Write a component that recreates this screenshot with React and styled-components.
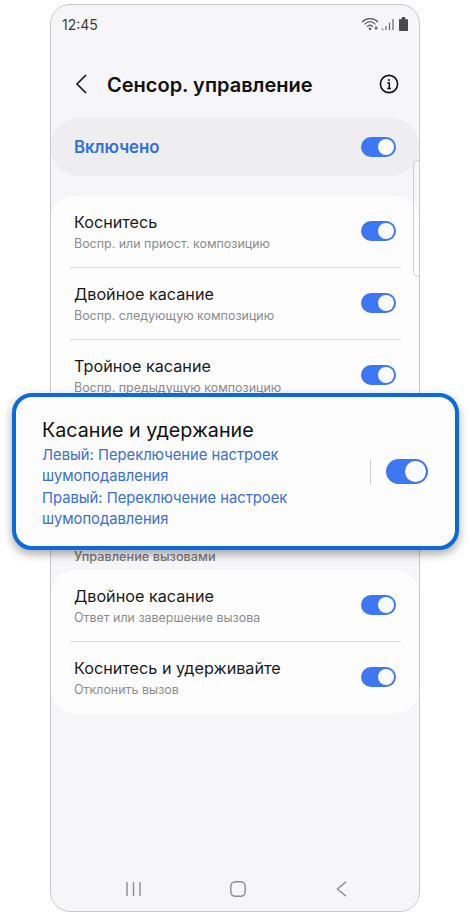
import React from "react";
import styled, { createGlobalStyle } from "styled-components";

const GlobalStyle = createGlobalStyle`
  html, body {
    margin: 0;
    padding: 0;
    background: #fff;
  }
  body {
    font-family: "Inter", "Roboto", "Liberation Sans", sans-serif;
  }
`;

const touchRows = [
  { title: "Коснитесь", sub: "Воспр. или приост. композицию" },
  { title: "Двойное касание", sub: "Воспр. следующую композицию" },
  { title: "Тройное касание", sub: "Воспр. предыдущую композицию" },
];

const callRows = [
  { title: "Двойное касание", sub: "Ответ или завершение вызова" },
  { title: "Коснитесь и удерживайте", sub: "Отклонить вызов" },
];

const App = () => {
  return (
    <Page>
      <GlobalStyle />
      <Phone>
        <StatusBar>
          <Time>12:45</Time>
          <StatusIcons />
        </StatusBar>
        <Header>
          <BackIcon />
          <Title>Сенсор. управление</Title>
          <InfoIcon />
        </Header>
        <MasterCard>
          <MasterLabel>Включено</MasterLabel>
          <Toggle />
        </MasterCard>
        <ListCard $height={340}>{touchRows.map(renderRow)}</ListCard>
        <SectionLabel>Управление вызовами</SectionLabel>
        <ListCard>{callRows.map(renderRow)}</ListCard>
        <NavBar>
          <NavIcons />
        </NavBar>
        <ScrollThumb />
      </Phone>
      <Popup>
        <PopupText>
          <PopupTitle>Касание и удержание</PopupTitle>
          <PopupSub>Левый: Переключение настроек шумоподавления</PopupSub>
          <PopupSub>Правый: Переключение настроек шумоподавления</PopupSub>
        </PopupText>
        <PopupDivider />
        <Toggle $large />
      </Popup>
    </Page>
  );
};

const renderRow = (row, index) => (
  <Row key={row.title} $first={index === 0}>
    <RowText>
      <RowTitle>{row.title}</RowTitle>
      <RowSub>{row.sub}</RowSub>
    </RowText>
    <Toggle />
  </Row>
);

const BackIcon = () => (
  <svg width="12" height="20" viewBox="0 0 12 20" fill="none">
    <path d="M11 1 L2 10 L11 19" stroke="#1c1c1c" strokeWidth="1.7" />
  </svg>
);

const InfoIcon = () => (
  <svg width="20" height="20" viewBox="0 0 20 20" fill="none">
    <circle cx="10" cy="10" r="8.6" stroke="#111" strokeWidth="1.6" />
    <circle cx="10" cy="6" r="1.1" fill="#111" />
    <path d="M8.3 9 H10.3 V14.6 M8.2 14.6 H12" stroke="#111" strokeWidth="1.5" />
  </svg>
);

const StatusIcons = () => (
  <svg width="50" height="16" viewBox="0 0 50 16" fill="none">
    <path d="M1 6 C5.5 1.6 12.5 1.6 17 6" stroke="#555" strokeWidth="1.2" />
    <path d="M3.5 8.4 C7 5 11 5 14.5 8.4" stroke="#555" strokeWidth="1.2" />
    <path d="M6 10.6 C8 8.8 10 8.8 12 10.6" stroke="#555" strokeWidth="1.2" />
    <circle cx="9" cy="12.8" r="1.3" fill="#555" />
    <path d="M15 10 V14 M13.4 12 H17 " stroke="#555" strokeWidth="1" />
    <path d="M21.5 14 V12.5 M25 14 V10 M28.5 14 V6.5 M32 14 V3" stroke="#666" strokeWidth="1.2" />
    <path d="M40 3.2 C40 2.7 40.3 2.4 40.8 2.4 H41 V1 H44 V2.4 H44.2 C44.7 2.4 45 2.7 45 3.2 L47 3.2 V14 C47 14.6 46.6 15 46 15 H39 C38.4 15 38 14.6 38 14 V3.2 Z" fill="#4a4a4a" />
  </svg>
);

const NavIcons = () => (
  <>
    <svg width="15" height="16" viewBox="0 0 15 16" fill="none">
      <path d="M1 1 V15 M7.5 1 V15 M14 1 V15" stroke="#8c8c8c" strokeWidth="1.4" />
    </svg>
    <svg width="16" height="16" viewBox="0 0 16 16" fill="none">
      <rect x="0.8" y="0.8" width="14.4" height="14.4" rx="4.5" stroke="#8c8c8c" strokeWidth="1.4" />
    </svg>
    <svg width="11" height="16" viewBox="0 0 11 16" fill="none">
      <path d="M10 0.8 L1.5 8 L10 15.2" stroke="#8c8c8c" strokeWidth="1.4" />
    </svg>
  </>
);

const Page = styled.div`
  position: relative;
  width: 470px;
  height: 915px;
  padding: 4px 50px;
  box-sizing: border-box;
  overflow: hidden;
`;

const Phone = styled.div`
  position: relative;
  display: flex;
  flex-direction: column;
  height: 908px;
  box-sizing: border-box;
  background: #f6f6f8;
  border: 1.5px solid #c9c9c9;
  border-radius: 20px;
  overflow: hidden;
`;

const StatusBar = styled.div`
  display: flex;
  align-items: center;
  justify-content: space-between;
  height: 38px;
  padding: 0 8px 0 11px;
`;

const Time = styled.span`
  font-size: 14px;
  color: #3c3c3c;
`;

const Header = styled.div`
  display: flex;
  align-items: center;
  height: 82px;
  padding: 0 20px 0 24px;
`;

const Title = styled.h1`
  flex: 1;
  margin: 1px 0 0 20px;
  font-size: 20px;
  font-weight: 600;
  color: #111;
`;

const MasterCard = styled.div`
  display: flex;
  align-items: center;
  justify-content: space-between;
  height: 58px;
  margin-top: -7px;
  padding: 0 23px;
  background: #eeeef0;
  border-radius: 28px;
`;

const MasterLabel = styled.span`
  font-size: 16.8px;
  font-weight: 600;
  color: #2f6fe0;
`;

const ListCard = styled.div`
  height: ${({ $height }) => ($height ? `${$height}px` : "auto")};
  margin-top: ${({ $height }) => ($height ? "20px" : "0")};
  padding: 0 18px;
  background: #fdfdfd;
  border-radius: 24px;
`;

const Row = styled.div`
  display: flex;
  align-items: center;
  justify-content: space-between;
  height: 71px;
  padding: 0 5px;
  border-top: ${({ $first }) => ($first ? "none" : "1px solid #dcdcdc")};
  & > span {
    margin-top: -2px;
  }
`;

const RowText = styled.div`
  display: flex;
  flex-direction: column;
  gap: 4px;
  margin-top: -1px;
`;

const RowTitle = styled.span`
  font-size: 16.2px;
  color: #1a1a1a;
`;

const RowSub = styled.span`
  font-size: 12.45px;
  color: #8c8c8c;
`;

const SectionLabel = styled.div`
  height: 21px;
  margin-top: 13px;
  padding-left: 23px;
  font-size: 12.7px;
  font-weight: 500;
  line-height: 16px;
  color: #777;
`;

const NavBar = styled.div`
  display: flex;
  align-items: center;
  justify-content: space-between;
  margin-top: auto;
  height: 44px;
  padding: 0 72px 0 75px;
  & svg:nth-child(2) {
    margin-left: -2px;
  }
`;

const ScrollThumb = styled.div`
  position: absolute;
  top: 155px;
  right: -1px;
  width: 6px;
  height: 115px;
  border: 1px solid #d0d0d0;
  border-right: none;
  border-radius: 5px 0 0 5px;
`;

const Toggle = styled.span`
  position: relative;
  flex: none;
  display: block;
  width: ${({ $large }) => ($large ? "42px" : "35px")};
  height: ${({ $large }) => ($large ? "25px" : "20px")};
  background: #3d77f3;
  border-radius: 13px;
  &::after {
    content: "";
    position: absolute;
    top: 2px;
    right: 2px;
    width: ${({ $large }) => ($large ? "21px" : "16px")};
    height: ${({ $large }) => ($large ? "21px" : "16px")};
    background: #fbfbfd;
    border-radius: 50%;
  }
`;

const Popup = styled.div`
  position: absolute;
  top: 393px;
  left: 12px;
  display: flex;
  align-items: center;
  width: 447px;
  height: 157px;
  box-sizing: border-box;
  padding: 0 27px 0 26px;
  background: #fcfcfd;
  border: 4px solid #0b6bdc;
  border-radius: 20px;
  box-shadow: 0 4px 10px rgba(0, 0, 0, 0.35);
`;

const PopupText = styled.div`
  flex: 1;
  display: flex;
  flex-direction: column;
  margin-top: 4px;
`;

const PopupTitle = styled.div`
  margin-bottom: 2px;
  font-size: 19.7px;
  line-height: 26px;
  color: #111;
`;

const PopupSub = styled.div`
  width: 270px;
  font-size: 14.75px;
  line-height: 21.5px;
  color: #3a6fd6;
`;

const PopupDivider = styled.div`
  width: 1.5px;
  height: 26px;
  margin-right: 15px;
  background: #cfcfcf;
`;

export default App;
